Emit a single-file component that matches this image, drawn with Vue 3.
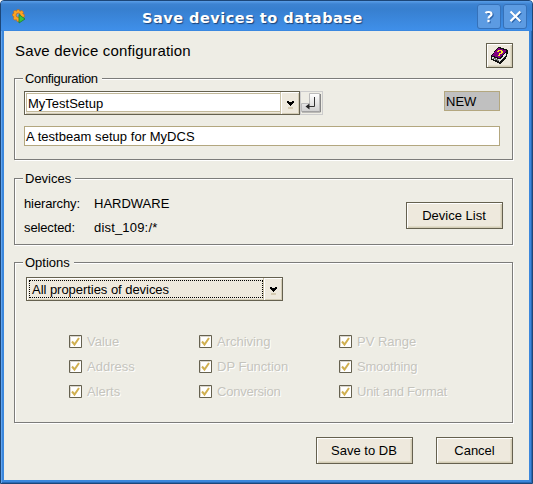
<script setup>
const options = [
  { name: 'Value' }, { name: 'Archiving' }, { name: 'PV Range' },
  { name: 'Address' }, { name: 'DP Function' }, { name: 'Smoothing', tight: true },
  { name: 'Alerts' }, { name: 'Conversion', tight: true }, { name: 'Unit and Format', tight: true }
]
</script>

<template>
  <div class="window">
    <header class="titlebar">
      <svg class="gear" width="14" height="15" viewBox="0 0 14 15">
        <path d="M5 .7h2.400l.4 1.600L10 1.500l1.500 1.700-.8 1.500 1.600.8v2.600l-1.800.6-.3 1.600-2 .6-.6 1.500H5l-.5-1.700-2.200.4L1.300 9.300l.7-1.500L.6 7V4.800L2 4.200 1.400 2.500 3 1.300l1.500.9z" fill="#ffa41f" stroke="#b8681c" stroke-width=".6" />
        <circle cx="6.200" cy="6.200" r="2.100" fill="#6fa4dd" stroke="#b3641a" stroke-width=".7" />
        <path d="M7 5.500l6 4.500-6 4z" fill="#3cc43a" stroke="#1d7d2b" stroke-width=".8" />
      </svg>
      <h1>Save devices to database</h1>
      <div class="controls">
        <button class="control" aria-label="Help">
          <svg width="24" height="25" viewBox="0 0 24 25" fill="none">
            <g class="mark-shadow"><path d="M9 9Q9.500 8 11.500 8q3 0 3 2.200c0 2-3 2-3 4.300M11.500 16v2.200" /></g>
            <path class="mark" d="M8.500 9Q9.500 8 11.500 8q3 0 3 2.200c0 2-3 2-3 4.300M11.500 15.800v2.400" />
          </svg>
        </button>
        <button class="control" aria-label="Close">
          <svg width="24" height="25" viewBox="0 0 24 25" fill="none">
            <g class="mark-shadow"><path d="M7.500 7.500l9.500 9.500m0-9.500l-9.500 9.500" /></g>
            <path class="mark" d="M7.500 7.500l9.800 9.800m0-9.800l-9.800 9.800" />
          </svg>
        </button>
      </div>
    </header>

    <main>
      <div class="intro">
        <h2>Save device configuration</h2>
        <button class="raised help" aria-label="Manual">
          <svg width="17" height="17" viewBox="0 0 17 17" shape-rendering="crispEdges">
            <path d="M0 8h1V7h1V6h1V4h1V3h1V2h1V1h1V0h3v1h3v1h3v1h1v4h-1v3h-1v2h-1v1h-1v1h-1v1h-1v1h-1v1H8v-1H6v-1H4v-1H2v-1H0z" fill="#111" />
            <path d="M1 10h2v1h3v1h3l3-3 3-4v3l-6 7H8v-1H6v-1H3v-1H1z" fill="#e4e4e4" />
            <path d="M2 11h2v1h2v1h2" fill="none" stroke="#777" />
            <path d="M1 8l2-1V5l4-4h2v1h3v1h3v1l-6 7H7v-1H4V9H1z" fill="#800080" />
            <path d="M7 3h4v1h1v2h-1v1H9v1H8V6h2V4H8v1H6V4h1zM7 8h2v1H7z" fill="#f8e52c" />
          </svg>
        </button>
      </div>

      <section class="group configuration">
        <h3><span>Configuration</span></h3>
        <div class="row">
          <div class="combo editable">
            <div class="value"><span>MyTestSetup</span></div>
            <div class="drop"><svg width="7" height="8" viewBox="0 0 7 8" shape-rendering="crispEdges"><path d="M0 0h2v1h3V0h2v2H6v1H5v1H4v1H3V4H2V3H1V2H0z" fill="#000" /><path d="M1 6h5v2H1z" fill="#d5cbb2" /></svg></div>
          </div>
          <button class="enter" aria-label="Apply">
            <svg width="21" height="22" viewBox="0 0 21 22">
              <defs><linearGradient id="key" x2="0" y2="1"><stop stop-color="#fff" /><stop offset="1" stop-color="#d0d0d0" /></linearGradient></defs>
              <path d="M8.500 1.500h10v18h-18v-8h8z" fill="url(#key)" stroke="#bbb" />
              <path d="M1 20h18.500V2" fill="none" stroke="#888" />
              <path d="M13.500 5v9.500H7" fill="none" stroke="#333" />
              <path d="M4.500 14.500l4-3v6z" fill="#222" />
            </svg>
          </button>
          <div class="badge"><span>NEW</span></div>
        </div>
        <div class="field"><span>A testbeam setup for MyDCS</span></div>
      </section>

      <section class="group devices">
        <h3><span>Devices</span></h3>
        <div class="body">
          <dl>
            <dt>hierarchy:</dt><dd>HARDWARE</dd>
            <dt>selected:</dt><dd class="path">dist_109:/*</dd>
          </dl>
          <button class="raised wide">Device List</button>
        </div>
      </section>

      <section class="group options">
        <h3><span>Options</span></h3>
        <div class="combo">
          <div class="value focused"><span>All properties of devices</span></div>
          <div class="drop"><svg width="7" height="8" viewBox="0 0 7 8" shape-rendering="crispEdges"><path d="M0 0h2v1h3V0h2v2H6v1H5v1H4v1H3V4H2V3H1V2H0z" fill="#000" /><path d="M1 6h5v2H1z" fill="#d5cbb2" /></svg></div>
        </div>
        <div class="checks">
          <div v-for="option in options" :key="option.name" class="check" :class="{ tight: option.tight }">
            <svg width="13" height="13" viewBox="0 0 13 13">
              <path d="M.5.500h12v12H.5z" fill="#fff" stroke="#65614f" />
              <path d="M1.500 11.500v-10h10" fill="none" stroke="#d9d5ca" />
              <path d="M3 6.500l2.500 3L10 3" fill="none" stroke="#d0b050" stroke-width="2" />
            </svg>
            <span>{{ option.name }}</span>
          </div>
        </div>
      </section>

      <footer>
        <button class="raised wide">Save to DB</button>
        <button class="raised">Cancel</button>
      </footer>
    </main>
  </div>
</template>

<style>
body { margin: 0; background: #fff; }
</style>

<style scoped>
* { box-sizing: border-box; }
h1, h2, h3, dl, dd { margin: 0; font-weight: normal; }
button { font: inherit; color: inherit; padding: 0; }
svg { display: block; flex: none; }
.window {
  width: 533px; height: 484px; padding: 0 3px 3px 2px;
  border: 1px solid #1c4678;
  border-radius: 4px 4px 0 0;
  background: #3b87dc;
  box-shadow: inset 1px 0 #63a5ee, inset -1px 0 #2a69b4, inset 0 -1px #2a69b4;
  display: flex; flex-direction: column;
  font: 13px/15px "Liberation Sans", Arial, sans-serif; color: #000;
}
.titlebar {
  height: 30px; flex: none; display: flex; align-items: flex-start;
  margin: 0 -3px 0 -2px; padding: 3px 5px 0 11px;
  background: linear-gradient(#5b9fe9 0, #3d83d2 3px, #377fcf 8px, #3f8fe9 29px, #3580d6 30px);
  border-radius: 3px 3px 0 0;
}
.gear { margin-top: 5px; }
h1 {
  flex: 1; padding: 5px 0 0 116px; white-space: nowrap;
  font: bold 14.5px/18px "DejaVu Sans", sans-serif; color: #fff;
  letter-spacing: .5px;
  text-shadow: 1px 1px 1px #1b4277;
}
.controls { display: flex; gap: 2px; }
.control { width: 24px; height: 25px; border: 0; border-radius: 3px; background: #5c9be2; box-shadow: inset 0 0 0 1px #3571b9; }
.mark { stroke: #fff; stroke-width: 2.200; }
.mark-shadow { stroke: #2c65ac; stroke-width: 2.500; transform: translate(1px, 1px); }
main { flex: 1; background: #eeede5; padding: 12px 16px 0 10px; margin-left: 1px; }
.intro { display: flex; justify-content: space-between; height: 35px; }
h2 { font-size: 15px; line-height: 17px; margin-top: -1px; padding-left: 1px; white-space: nowrap; letter-spacing: .16px; }
.raised {
  height: 27px; width: 77px; border: 1px solid #65614f; background: #eee9dd;
  box-shadow: inset 1px 1px #fff, inset -1px -1px #d3ccb5, inset -2px -2px #e1dcc9;
  display: flex; align-items: center; justify-content: center;
}
.wide { width: 97px; padding-right: 1px; }
.help { width: 27px; height: 25px; padding-right: 1px; }
.group { width: 499px; border: 1px solid #7c7c7a; box-shadow: 1px 1px #fff, inset 1px 1px #fff; }
h3 { height: 12px; display: flex; padding-left: 8px; font-size: 13px; }
h3 span { background: #eeede5; height: 15px; line-height: 15px; padding: 0 4px 0 2px; margin-top: -8px; }
.configuration { height: 82px; }
.configuration h3 { letter-spacing: -.36px; }
.row { display: flex; padding: 0 0 0 9px; height: 35px; }
.combo { width: 276px; height: 24px; border: 1px solid #65614f; background: #eee9dd; display: flex; box-shadow: inset 1px 1px #fff, inset -1px -1px #d3ccb5; }
.value { flex: 1; }
.editable .value { margin: 1px 0 2px 1px; padding: 2px 0 0 1px; background: #fff; border: 1px solid #c2b99a; }
.focused { margin: 2px 1px 2px 2px; padding: 1px 0 0 2px; border: 1px dotted #000; letter-spacing: -.04px; }
.drop { width: 18px; display: flex; align-items: center; justify-content: center; border-left: 1px solid #fff; box-shadow: -1px 0 #c9c1a8; }
.drop svg { margin-top: 4px; }
.enter { width: 23px; height: 24px; border: 1px solid #ccc; background: #eeede5; }
.badge { margin-left: 121px; width: 56px; height: 20px; border: 1px solid #b3a77f; background: #c0c0c0; padding: 2px 1px; }
.field { margin-left: 9px; width: 476px; height: 20px; border: 1px solid #b3a77f; background: #fff; padding: 2px 1px; letter-spacing: .04px; }
.devices { margin-top: 18px; height: 67px; }
.body { display: flex; justify-content: space-between; padding: 5px 9px 0 9px; }
dl { display: grid; grid-template-columns: 70px auto; grid-auto-rows: 24px; }
dt { letter-spacing: -.12px; }
.path { letter-spacing: .18px; }
.body .raised { margin-top: 6px; }
.options { margin-top: 17px; height: 161px; }
.options h3 { height: 14px; }
.options .combo { margin-left: 11px; width: 257px; }
.checks { display: grid; grid-template-columns: 130px 140px auto; grid-auto-rows: 25px; padding: 34px 0 0 54px; }
.check { display: flex; gap: 5px; align-items: flex-start; color: #c5c4bd; text-shadow: 1px 1px #fff; }
.check span { margin-top: -1px; }
.tight { letter-spacing: -.22px; }
footer { display: flex; justify-content: flex-end; gap: 23px; padding-top: 14px; }
</style>
